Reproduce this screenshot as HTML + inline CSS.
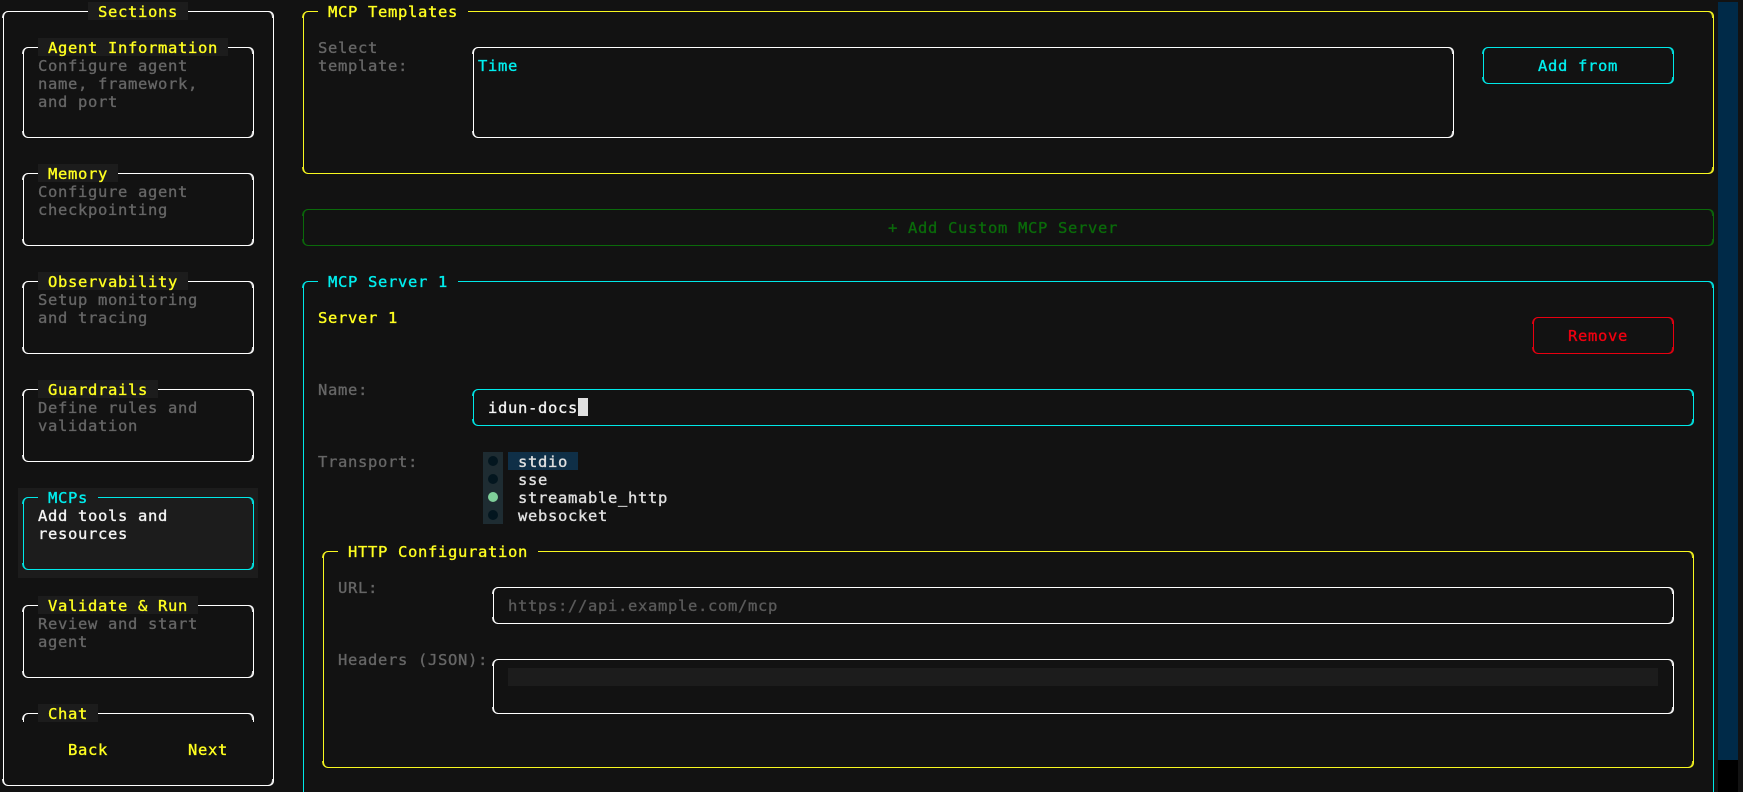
<!DOCTYPE html>
<html><head><meta charset="utf-8"><style>
html,body{margin:0;padding:0;background:#121212;width:1743px;height:792px;overflow:hidden}
#r{position:relative;width:1743px;height:792px;overflow:hidden;font-family:"DejaVu Sans Mono","Liberation Mono",monospace;font-size:15.5px;letter-spacing:.67px}
.b,.t,.f{position:absolute;box-sizing:border-box}
.b{border:1px solid #fff;border-radius:5px}
.b::before{content:"";position:absolute;left:-2px;right:-1px;top:-1px;bottom:-1px;border-style:solid;border-width:1px 2px;border-color:inherit;border-radius:6px;opacity:.85;
-webkit-mask:linear-gradient(#000,#000) 0 0/6px 7px no-repeat,linear-gradient(#000,#000) 100% 0/6px 7px no-repeat,linear-gradient(#000,#000) 0 100%/6px 7px no-repeat,linear-gradient(#000,#000) 100% 100%/6px 7px no-repeat;
mask:linear-gradient(#000,#000) 0 0/6px 7px no-repeat,linear-gradient(#000,#000) 100% 0/6px 7px no-repeat,linear-gradient(#000,#000) 0 100%/6px 7px no-repeat,linear-gradient(#000,#000) 100% 100%/6px 7px no-repeat}
.b.nb{border-bottom:0;border-radius:5px 5px 0 0}
.b.nb::before{border-radius:6px 6px 0 0;border-bottom:0;
-webkit-mask:linear-gradient(#000,#000) 0 0/6px 7px no-repeat,linear-gradient(#000,#000) 100% 0/6px 7px no-repeat;
mask:linear-gradient(#000,#000) 0 0/6px 7px no-repeat,linear-gradient(#000,#000) 100% 0/6px 7px no-repeat}
.t{height:18px;line-height:20px;white-space:pre;-webkit-text-stroke:.35px currentColor}
.y{color:#ffff20}.c{color:#00eeee}.g{color:#666}.w{color:#f4f4f4}.e{color:#e0e0e0}
.lb{background:#1c1c1c}
.gap{background:#121212}
</style></head><body><div id="r">

<!-- Sidebar -->
<div class="b" style="left:3px;top:11px;width:271px;height:775px"></div>
<div class="t y lb" style="left:88px;top:2px;width:100px;padding-left:10px">Sections</div>

<div class="b" style="left:23px;top:47px;width:231px;height:91px"></div>
<div class="t y lb" style="left:38px;top:38px;width:190px;padding-left:10px">Agent Information</div>
<div class="t g" style="left:38px;top:56px">Configure agent</div>
<div class="t g" style="left:38px;top:74px">name, framework,</div>
<div class="t g" style="left:38px;top:92px">and port</div>

<div class="b" style="left:23px;top:173px;width:231px;height:73px"></div>
<div class="t y lb" style="left:38px;top:164px;width:80px;padding-left:10px">Memory</div>
<div class="t g" style="left:38px;top:182px">Configure agent</div>
<div class="t g" style="left:38px;top:200px">checkpointing</div>

<div class="b" style="left:23px;top:281px;width:231px;height:73px"></div>
<div class="t y lb" style="left:38px;top:272px;width:150px;padding-left:10px">Observability</div>
<div class="t g" style="left:38px;top:290px">Setup monitoring</div>
<div class="t g" style="left:38px;top:308px">and tracing</div>

<div class="b" style="left:23px;top:389px;width:231px;height:73px"></div>
<div class="t y lb" style="left:38px;top:380px;width:120px;padding-left:10px">Guardrails</div>
<div class="t g" style="left:38px;top:398px">Define rules and</div>
<div class="t g" style="left:38px;top:416px">validation</div>

<div class="f" style="left:18px;top:488px;width:240px;height:90px;background:#1c1c1c"></div>
<div class="b" style="left:23px;top:497px;width:231px;height:73px;border-color:#00e8e8"></div>
<div class="t c lb" style="left:38px;top:488px;width:60px;padding-left:10px">MCPs</div>
<div class="t w" style="left:38px;top:506px">Add tools and</div>
<div class="t w" style="left:38px;top:524px">resources</div>

<div class="b" style="left:23px;top:605px;width:231px;height:73px"></div>
<div class="t y lb" style="left:38px;top:596px;width:160px;padding-left:10px">Validate &amp; Run</div>
<div class="t g" style="left:38px;top:614px">Review and start</div>
<div class="t g" style="left:38px;top:632px">agent</div>

<div class="b nb" style="left:23px;top:713px;width:231px;height:9px"></div>
<div class="t y lb" style="left:38px;top:704px;width:60px;padding-left:10px">Chat</div>

<div class="t y" style="left:68px;top:740px">Back</div>
<div class="t y" style="left:188px;top:740px">Next</div>

<!-- MCP Templates -->
<div class="b" style="left:303px;top:11px;width:1411px;height:163px;border-color:#f8f820"></div>
<div class="t y gap" style="left:318px;top:2px;width:150px;padding-left:10px">MCP Templates</div>
<div class="t g" style="left:318px;top:38px">Select</div>
<div class="t g" style="left:318px;top:56px">template:</div>
<div class="b" style="left:473px;top:47px;width:981px;height:91px"></div>
<div class="t c" style="left:478px;top:56px">Time</div>
<div class="b" style="left:1483px;top:47px;width:191px;height:37px;border-color:#00e8e8"></div>
<div class="t c" style="left:1538px;top:56px">Add from</div>

<!-- Add custom -->
<div class="b" style="left:303px;top:209px;width:1411px;height:37px;border-color:#0a6a0a"></div>
<div class="t" style="left:888px;top:218px;color:#0a6a0a">+ Add Custom MCP Server</div>

<!-- MCP Server 1 -->
<div class="b nb" style="left:303px;top:281px;width:1411px;height:511px;border-color:#00e8e8"></div>
<div class="t c gap" style="left:318px;top:272px;width:140px;padding-left:10px">MCP Server 1</div>
<div class="t y" style="left:318px;top:308px">Server 1</div>
<div class="b" style="left:1533px;top:317px;width:141px;height:37px;border-color:#e80010"></div>
<div class="t" style="left:1568px;top:326px;color:#f00010">Remove</div>

<div class="t g" style="left:318px;top:380px">Name:</div>
<div class="b" style="left:473px;top:389px;width:1221px;height:37px;border-color:#00e8e8"></div>
<div class="t w" style="left:488px;top:398px">idun-docs</div>
<div class="f" style="left:578px;top:398px;width:10px;height:18px;background:#e0e0e0"></div>

<div class="t g" style="left:318px;top:452px">Transport:</div>
<div class="f" style="left:483px;top:452px;width:20px;height:72px;background:#1e2c32"></div>
<div class="f" style="left:488px;top:456px;width:10px;height:10px;border-radius:50%;background:#03161f"></div>
<div class="f" style="left:488px;top:474px;width:10px;height:10px;border-radius:50%;background:#03161f"></div>
<div class="f" style="left:488px;top:492px;width:10px;height:10px;border-radius:50%;background:#7fcf9a"></div>
<div class="f" style="left:488px;top:510px;width:10px;height:10px;border-radius:50%;background:#03161f"></div>
<div class="f" style="left:508px;top:452px;width:70px;height:18px;background:#0f2f47"></div>
<div class="t e" style="left:518px;top:452px">stdio</div>
<div class="t e" style="left:518px;top:470px">sse</div>
<div class="t e" style="left:518px;top:488px">streamable_http</div>
<div class="t e" style="left:518px;top:506px">websocket</div>

<!-- HTTP Config -->
<div class="b" style="left:323px;top:551px;width:1371px;height:217px;border-color:#f8f820"></div>
<div class="t y gap" style="left:338px;top:542px;width:200px;padding-left:10px">HTTP Configuration</div>
<div class="t g" style="left:338px;top:578px">URL:</div>
<div class="b" style="left:493px;top:587px;width:1181px;height:37px"></div>
<div class="t" style="left:508px;top:596px;color:#5a5a5a">https://api.example.com/mcp</div>
<div class="t g" style="left:338px;top:650px">Headers (JSON):</div>
<div class="b" style="left:493px;top:659px;width:1181px;height:55px"></div>
<div class="f" style="left:508px;top:668px;width:1150px;height:18px;background:#1c1c1c"></div>

<!-- Scrollbar -->
<div class="f" style="left:1718px;top:2px;width:20px;height:758px;background:#002a48"></div>
<div class="f" style="left:1718px;top:760px;width:20px;height:32px;background:#000"></div>
</div></body></html>
